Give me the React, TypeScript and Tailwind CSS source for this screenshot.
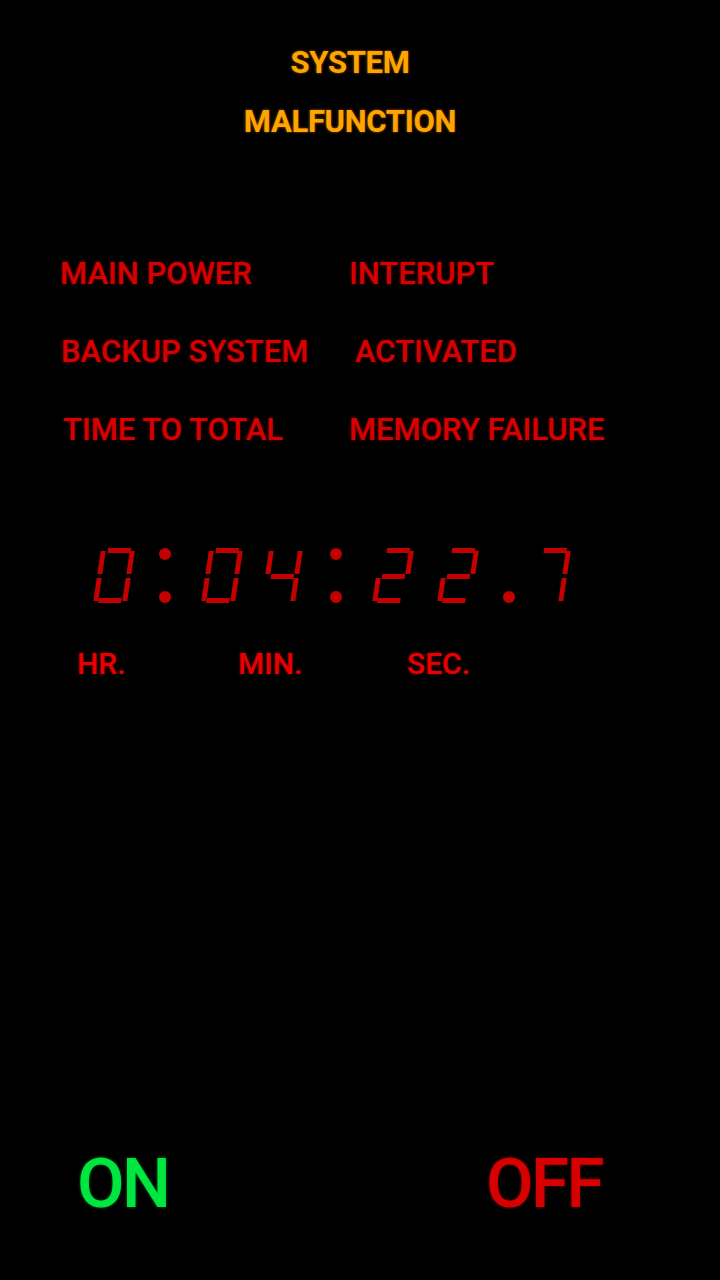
import React from "react";

type Seg = "a" | "b" | "c" | "d" | "e" | "f" | "g";

// segment rects in digit space, origin at bottom-left, y up is negative
const SEGS: Record<Seg, [number, number, number, number]> = {
  a: [7, -55, 23, 5],
  b: [29, -52, 5, 23],
  c: [29, -25, 5, 23],
  d: [5, -5, 23, 5],
  e: [0, -25, 5, 23],
  f: [0, -52, 5, 23],
  g: [6, -29, 23, 5],
};

const DIGITS: Record<string, Seg[]> = {
  "0": ["a", "b", "c", "d", "e", "f"],
  "2": ["a", "b", "g", "e", "d"],
  "4": ["f", "g", "b", "c"],
  "7": ["a", "b", "c"],
};

function Digit({ x, value }: { x: number; value: string }) {
  return (
    <g transform={`translate(${x} 62) skewX(-8.5)`}>
      {DIGITS[value].map((s) => {
        const [sx, sy, w, h] = SEGS[s];
        return <rect key={s} x={sx} y={sy} width={w} height={h} fill="#c20000" />;
      })}
    </g>
  );
}

function Clock() {
  // digits laid out by their bottom-left corner
  const digits: [number, string][] = [
    [93, "0"],
    [201, "0"],
    [261, "4"],
    [372, "2"],
    [437, "2"],
    [529, "7"],
  ];
  const dots: [number, number][] = [
    [165, 13],
    [165, 56],
    [336, 13],
    [336, 56],
    [509, 56],
  ];
  return (
    <svg width="720" height="70" viewBox="0 0 720 70" className="block">
      {digits.map(([x, v], i) => (
        <Digit key={i} x={x} value={v} />
      ))}
      {dots.map(([cx, cy], i) => (
        <circle key={i} cx={cx} cy={cy} r={6} fill="#c20000" />
      ))}
    </svg>
  );
}

const red = "text-[#d60000] [text-shadow:0_0_3px_rgba(200,0,0,0.55)]";

export default function App() {
  return (
    <div className="w-[720px] h-[1280px] bg-black overflow-hidden flex flex-col font-['Roboto','Liberation_Sans',sans-serif] whitespace-nowrap select-none">
      {/* header */}
      <div className="pt-[47px] pr-[20px] flex flex-col items-center gap-[28px] text-[31px] leading-[31px] font-bold tracking-[-0.3px] text-[#ffa500] [text-shadow:0_0_3px_rgba(255,140,0,0.6)]">
        <div>SYSTEM</div>
        <div>MALFUNCTION</div>
      </div>

      {/* status rows */}
      <div className={`mt-[121px] flex flex-col gap-[47px] text-[31px] leading-[31px] font-medium ${red}`}>
        <div className="flex">
          <div className="w-[349px] shrink-0 pl-[60px]">MAIN POWER</div>
          <div>INTERUPT</div>
        </div>
        <div className="flex">
          <div className="w-[349px] shrink-0 pl-[61px]">BACKUP SYSTEM</div>
          <div className="ml-[6px]">ACTIVATED</div>
        </div>
        <div className="flex">
          <div className="w-[349px] shrink-0 pl-[63px]">TIME TO TOTAL</div>
          <div>MEMORY FAILURE</div>
        </div>
      </div>

      {/* countdown */}
      <div className="mt-[96px]">
        <Clock />
      </div>

      <div className="mt-[38px] flex pl-[77px] text-[30px] leading-[30px] font-medium text-[#e80000] [text-shadow:0_0_3px_rgba(230,0,0,0.5)]">
        <div className="w-[161px] shrink-0">HR.</div>
        <div className="w-[169px] shrink-0">MIN.</div>
        <div>SEC.</div>
      </div>

      {/* switches */}
      <div className="mt-[470px] flex pl-[77px] text-[69px] leading-[69px] font-medium tracking-[-2.5px]">
        <div className="w-[409px] shrink-0 text-[#00e640] [text-shadow:0_0_3px_rgba(0,230,64,0.5)]">ON</div>
        <div className={red}>OFF</div>
      </div>
    </div>
  );
}
